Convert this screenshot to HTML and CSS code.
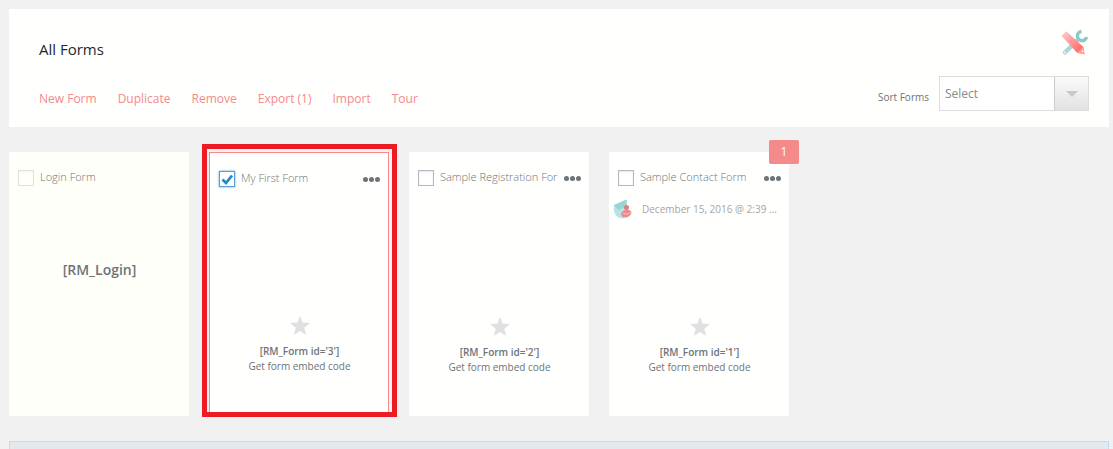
FILE: index.html
```
<!DOCTYPE html>
<html lang="en">
<head>
  <meta charset="UTF-8">
  <meta name="viewport" content="width=device-width, initial-scale=1.0">
  <title>All Forms</title>
  <link rel="stylesheet" href="styles.css">
</head>
<body>

  <!-- shared star shape -->
  <svg class="defs" width="0" height="0" aria-hidden="true">
    <symbol id="star" viewBox="0 0 20 19">
      <path d="M10 0l2.6 6.6 7.4.5-5.7 4.6 1.9 7.3-6.2-4-6.2 4 1.9-7.3L0 7.1l7.4-.5z"/>
    </symbol>
  </svg>

  <!-- operations bar -->
  <header class="toolbar">
    <div class="toolbar-top">
      <h1 class="title">All Forms</h1>
      <a class="settings" href="#" aria-label="Settings">
        <svg width="27" height="26" viewBox="0 0 27 26">
          <defs>
            <linearGradient id="pencil" x1="0" y1="0" x2="1" y2="1">
              <stop offset="0" stop-color="#ffd0d0"/>
              <stop offset="1" stop-color="#ff5c5c"/>
            </linearGradient>
          </defs>
          <path fill="none" stroke="#a8d8d5" stroke-width="4.4" stroke-linecap="round" d="M4 22.500L16 10.500"/>
          <path fill="none" stroke="#8cc9c7" stroke-width="3.400" d="M20.500 1.500a4.600 4.600 0 1 0 5 5.500"/>
          <circle fill="#fffffe" cx="4" cy="22.400" r="0.900"/>
          <path fill="url(#pencil)" d="M0.500 6L5.200 1.200 22.500 17 16.300 23z"/>
          <path fill="#ff9a94" d="M22.500 17l1.300 7.600-7.500-1.600z"/>
          <path fill="#fff2ee" d="M20.300 21.500l1.700-1.700.6 2.700z"/>
        </svg>
      </a>
    </div>
    <div class="toolbar-bottom">
      <nav class="actions">
        <a href="#">New Form</a>
        <a href="#">Duplicate</a>
        <a href="#">Remove</a>
        <a href="#">Export (1)</a>
        <a href="#">Import</a>
        <a href="#">Tour</a>
      </nav>
      <div class="sort">
        <label for="sort-forms">Sort Forms</label>
        <div class="select-box">
          <select id="sort-forms">
            <option>Select</option>
          </select>
          <span class="arrow"></span>
        </div>
      </div>
    </div>
  </header>

  <!-- form cards -->
  <main class="cards">
    <section class="card login">
      <div class="card-head">
        <input type="checkbox" id="form-login" disabled>
        <label for="form-login">Login Form</label>
      </div>
      <p class="login-code">[RM_Login]</p>
    </section>

    <section class="card selected">
      <div class="card-head">
        <input type="checkbox" id="form-3" checked>
        <label for="form-3">My First Form</label>
        <button class="more" type="button" aria-label="More"><i></i><i></i><i></i></button>
      </div>
      <div class="card-foot">
        <svg class="star" width="20" height="19"><use href="#star"/></svg>
        <p class="code">[RM_Form id='3']</p>
        <a class="embed" href="#">Get form embed code</a>
      </div>
    </section>

    <section class="card">
      <div class="card-head">
        <input type="checkbox" id="form-2">
        <label for="form-2">Sample Registration For</label>
        <button class="more" type="button" aria-label="More"><i></i><i></i><i></i></button>
      </div>
      <div class="card-foot">
        <svg class="star" width="20" height="19"><use href="#star"/></svg>
        <p class="code">[RM_Form id='2']</p>
        <a class="embed" href="#">Get form embed code</a>
      </div>
    </section>

    <section class="card">
      <a class="badge" href="#">1</a>
      <div class="card-head">
        <input type="checkbox" id="form-1">
        <label for="form-1">Sample Contact Form</label>
        <button class="more" type="button" aria-label="More"><i></i><i></i><i></i></button>
      </div>
      <div class="last-entry">
        <svg width="20" height="20" viewBox="0 0 20 20">
          <path fill="#b5e4e2" d="M1 6L13.500 0.500v12L11 19Q6 20 3 16.500 0 12 1 6z"/>
          <path fill="#98d6d4" d="M1 6L13.500 0.500v7L5 11z"/>
          <circle fill="#e27a7e" cx="13.500" cy="8.500" r="2.500"/>
          <path fill="#ea8a8c" d="M8 16c0-6 10-7 10.500-2.500C18 17 14 19 10.500 18.500z"/>
          <path stroke="#f6c4c4" d="M10 14.500l5 .500 3-2" fill="none"/>
        </svg>
        <span>December 15, 2016 @ 2:39 ...</span>
      </div>
      <div class="card-foot">
        <svg class="star" width="20" height="19"><use href="#star"/></svg>
        <p class="code">[RM_Form id='1']</p>
        <a class="embed" href="#">Get form embed code</a>
      </div>
    </section>
  </main>

  <div class="banner"></div>

</body>
</html>
```

FILE: styles.css
```
* {
  box-sizing: border-box;
}

body {
  display: flex;
  flex-direction: column;
  min-height: 100vh;
  margin: 0;
  padding: 9px 4px 0 9px;
  background-color: #f1f1f1;
  color: #6b7478;
  font-family: "Open Sans", "Noto Sans", sans-serif;
  font-size: 12px;
}

h1, p {
  margin: 0;
}

a {
  color: inherit;
  text-decoration: none;
}

.defs {
  position: absolute;
}

/* toolbar */
.toolbar {
  padding: 20px 20px 16px 30px;
  background-color: #fffffe;
}

.toolbar-top,
.toolbar-bottom {
  display: flex;
  justify-content: space-between;
}

.title {
  padding-top: 10px;
  color: #23282d;
  font-size: 15px;
  font-weight: 500;
  line-height: 20px;
}

.settings {
  height: 28px;
  padding: 1px;
}

.toolbar-bottom {
  align-items: center;
  margin-top: 17px;
}

.actions {
  display: flex;
  gap: 21px;
  padding-top: 10px;
  color: #f48a8a;
  line-height: 16px;
}

.sort {
  display: flex;
  align-items: center;
  gap: 10px;
}

.sort label {
  padding-top: 6px;
  font-size: 10px;
}

.select-box {
  display: flex;
  position: relative;
}

select {
  appearance: none;
  width: 150px;
  height: 35px;
  padding: 0 40px 0 5px;
  border: 1px solid #ddd;
  border-radius: 0;
  background-color: #fff;
  color: #888;
  font: inherit;
}

.arrow {
  display: flex;
  position: absolute;
  top: 1px;
  right: 1px;
  bottom: 1px;
  width: 34px;
  align-items: center;
  justify-content: center;
  border-left: 1px solid #ccc;
  background: linear-gradient(#fafafa, #e2e2e2);
  pointer-events: none;
}

.arrow::after {
  content: "";
  border: 6px solid transparent;
  border-top-color: #c8c8c8;
  border-bottom: 0;
}

/* cards */
.cards {
  display: flex;
  flex-wrap: wrap;
  gap: 20px;
  margin: 25px 0;
}

.card {
  display: flex;
  position: relative;
  flex-direction: column;
  width: 180px;
  min-height: 264px;
  padding: 16px 8px 41px 9px;
  background-color: #fffffe;
}

.card.login {
  background-color: #fffffa;
}

.card.selected {
  border: 1px solid #f48a8a;
}

/* thick frame around the selected card */
.card.selected::after {
  content: "";
  position: absolute;
  inset: -9px -9px -2px -8px;
  border: 5px solid #ed1c24;
  pointer-events: none;
}

.card-head {
  display: flex;
  align-items: center;
  height: 20px;
}

.card-head label {
  flex: 1;
  overflow: hidden;
  margin-left: 6px;
  padding-bottom: 2px;
  font-size: 11px;
  font-weight: 300;
  line-height: 18px;
  white-space: nowrap;
}

input[type="checkbox"] {
  appearance: none;
  flex: none;
  width: 16px;
  height: 16px;
  margin: 0;
  border: 1px solid #b4b9be;
  background-color: #fff;
  box-shadow: inset 0 1px 2px rgba(0, 0, 0, 0.1);
}

input[type="checkbox"]:disabled {
  opacity: 0.4;
}

input[type="checkbox"]:checked {
  border-color: #5b9dd9;
  box-shadow: 0 0 2px rgba(30, 140, 190, 0.8);
  background-image: url("data:image/svg+xml,%3Csvg xmlns='http://www.w3.org/2000/svg' viewBox='0 0 14 14'%3E%3Cpath d='M2.500 7.500l3.500 3.500 6-7.500' fill='none' stroke='%231e8cbe' stroke-width='2.800'/%3E%3C/svg%3E");
}

.more {
  display: flex;
  flex: none;
  gap: 1px;
  margin-left: 5px;
  padding: 0;
  border: 0;
  background: none;
}

.more i {
  width: 5px;
  height: 5px;
  border-radius: 50%;
  background-color: #6b7478;
}

.login-code {
  margin-top: 72px;
  font-size: 14px;
  font-weight: 600;
  line-height: 20px;
  text-align: center;
}

.last-entry {
  display: flex;
  align-items: center;
  gap: 9px;
  margin: 11px 0 0 -5px;
  color: #a5a5a5;
  font-size: 10px;
  line-height: 20px;
  white-space: nowrap;
}

.badge {
  position: absolute;
  top: -12px;
  right: -10px;
  width: 30px;
  border-radius: 2px;
  background-color: #f48a8a;
  color: #fff;
  line-height: 24px;
  text-align: center;
}

.card-foot {
  display: flex;
  flex-direction: column;
  align-items: center;
  margin-top: auto;
  font-size: 10px;
  line-height: 15px;
}

.star {
  margin-bottom: 9px;
  fill: #e0e0e0;
}

.code {
  font-weight: 600;
}

/* notice strip under the list */
.banner {
  flex: 1;
  border: 1px solid #c3dde6;
  border-bottom: 0;
  background-color: #e2eaef;
}
```
